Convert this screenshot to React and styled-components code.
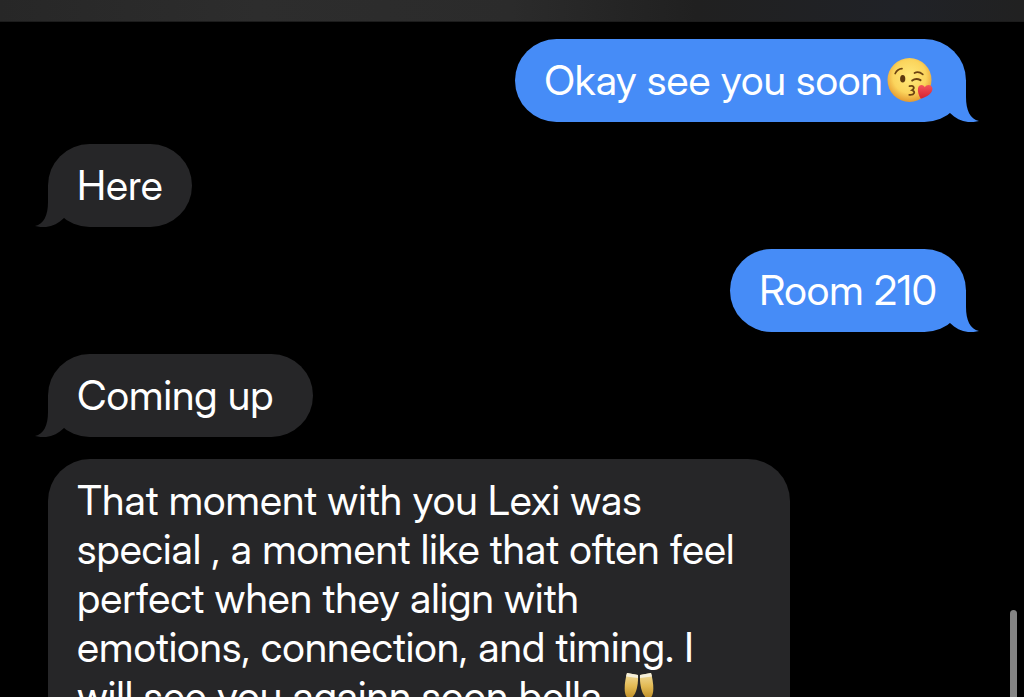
import styled, { createGlobalStyle } from 'styled-components'

const messages = [
  { id: 1, from: 'me', text: 'Okay see you soon', emoji: 'kiss', tail: true },
  { id: 2, from: 'them', text: 'Here', tail: true },
  { id: 3, from: 'me', text: 'Room 210', tail: true },
  { id: 4, from: 'them', text: 'Coming up ', tail: true },
  {
    id: 5,
    from: 'them',
    text: 'That moment with you Lexi was special , a moment like that often feel perfect when they align with emotions, connection, and timing. I will see you againn soon bella ',
    emoji: 'cheers',
    long: true
  }
]

function KissEmoji() {
  return (
    <EmojiIcon viewBox="0 0 46 46" role="img" aria-label="Face blowing a kiss">
      <defs>
        <radialGradient id="kiss-face" cx="50%" cy="42%" r="58%">
          <stop offset="0" stopColor="#ffe97c" />
          <stop offset="0.65" stopColor="#fbd45c" />
          <stop offset="1" stopColor="#e59a30" />
        </radialGradient>
        <linearGradient id="kiss-heart" x1="0" y1="0" x2="0" y2="1">
          <stop offset="0" stopColor="#f4545c" />
          <stop offset="1" stopColor="#d3222f" />
        </linearGradient>
      </defs>
      <circle cx="22.5" cy="23" r="22" fill="url(#kiss-face)" />
      <g fill="none" stroke="#6b4212" strokeLinecap="round">
        <path d="M8.2 16.5Q10.5 11.8 15 11.6" strokeWidth="1.7" />
        <path d="M27.5 16Q31.5 13.8 35.8 17.4" strokeWidth="1.7" />
        <path d="M25.2 23.6Q29 20.5 33.5 23.2" strokeWidth="2" />
        <path
          d="M22.5 29.2C26.5 28 28.6 31 25 33.2C28.9 34.4 27.5 38.4 22.3 37.8"
          strokeWidth="1.8"
        />
      </g>
      <ellipse cx="15.7" cy="21.7" rx="2.6" ry="3.8" fill="#5c380f" />
      <path
        d="M33.8 41.8C31.8 38.5 30.4 34.8 31 31.3C31.7 27.6 36 26.8 37.8 30.2C39.8 26.6 44.8 27.4 45.4 31.2C46 36.2 39.8 39.8 33.8 41.8Z"
        fill="url(#kiss-heart)"
      />
    </EmojiIcon>
  )
}

function CheersEmoji() {
  return (
    <EmojiIcon viewBox="0 0 46 46" role="img" aria-label="Clinking glasses">
      <defs>
        <linearGradient id="cheers-wine" x1="0" y1="0" x2="0" y2="1">
          <stop offset="0" stopColor="#f0dca0" />
          <stop offset="0.5" stopColor="#e3bb55" />
          <stop offset="1" stopColor="#bd8c25" />
        </linearGradient>
      </defs>
      <g stroke="#b9b4a5" strokeWidth="1.6" strokeLinecap="round">
        <path d="M14 24L9 40M4 38L14 42" />
        <path d="M32 24L37 40M32 42L42 38" />
      </g>
      <path d="M11 0L22 2C22.5 12 20 24 13.5 26C7 24 8 11 11 0Z" fill="url(#cheers-wine)" />
      <path d="M35 0L24 2C23.5 12 26 24 32.5 26C39 24 38 11 35 0Z" fill="url(#cheers-wine)" />
      <path d="M11 0L22 2L22 5L10 3.5Z" fill="#f5efda" />
      <path d="M35 0L24 2L24 5L36 3.5Z" fill="#f5efda" />
    </EmojiIcon>
  )
}

const emojis = { kiss: KissEmoji, cheers: CheersEmoji }

function Message({ from, text, emoji, tail, long }) {
  const Emoji = emojis[emoji]

  return (
    <Bubble $mine={from === 'me'} $long={long}>
      {text}
      {Emoji && <Emoji />}
      {tail && (
        <Tail $mine={from === 'me'} viewBox="0 0 32 42" aria-hidden="true">
          <path d="M0 0H19V17C19 30 23 39 32 41C21 44 11 41 3 33L0 30Z" />
        </Tail>
      )}
    </Bubble>
  )
}

function App() {
  return (
    <>
      <GlobalStyle />
      <Screen>
        <TopBar />
        <Conversation>
          {messages.map((message) => (
            <Message key={message.id} {...message} />
          ))}
        </Conversation>
        <ScrollThumb />
      </Screen>
    </>
  )
}

const GlobalStyle = createGlobalStyle`
  * {
    box-sizing: border-box;
  }

  body {
    margin: 0;
    background: #000;
  }
`

const Screen = styled.main`
  position: relative;
  display: flex;
  flex-direction: column;
  height: 100vh;
  overflow: hidden;
  background: #000;
  font-family: 'Inter Display', Inter, 'Liberation Sans', sans-serif;
`

const TopBar = styled.header`
  flex: none;
  height: 22px;
  background: linear-gradient(
    90deg,
    #272727 0%,
    #2d2d2d 25%,
    #2b2b2b 50%,
    #202020 68%,
    #202227 88%,
    #212121 100%
  );
  border-bottom: 1px solid #1c1c1c;
`

const Conversation = styled.section`
  display: flex;
  flex-direction: column;
  gap: 22px;
  padding: 17px 58px 0 48px;
`

const Bubble = styled.div`
  position: relative;
  flex: none;
  align-self: ${({ $mine }) => ($mine ? 'flex-end' : 'flex-start')};
  max-width: 742px;
  padding: 17px ${({ $long }) => ($long ? '40px' : '29px')} 17px 29px;
  border-radius: 42px;
  background: ${({ $mine }) => ($mine ? '#468cf7' : '#262628')};
  color: #fff;
  font-size: 41px;
  line-height: 49px;
  white-space: pre-wrap;
`

const Tail = styled.svg`
  position: absolute;
  bottom: 0;
  ${({ $mine }) => ($mine ? 'right: -13px;' : 'left: -13px;')}
  width: 32px;
  height: 42px;
  fill: ${({ $mine }) => ($mine ? '#468cf7' : '#262628')};
  transform: ${({ $mine }) => ($mine ? 'none' : 'scaleX(-1)')};
`

const EmojiIcon = styled.svg`
  width: 46px;
  height: 46px;
  margin: 1px 4px;
  vertical-align: top;
`

const ScrollThumb = styled.div`
  position: absolute;
  top: 610px;
  right: 7px;
  bottom: -8px;
  width: 7px;
  border-radius: 4px;
  background: #858585;
`

export default App
